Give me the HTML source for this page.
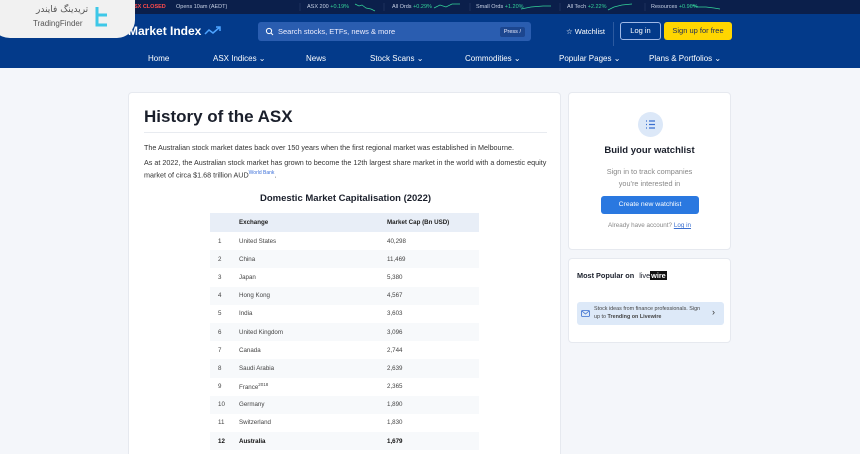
<!DOCTYPE html>
<html style="overflow:hidden;height:454px"><head><meta charset="utf-8"><style>
*{margin:0;padding:0;box-sizing:border-box}
body{width:860px;height:454px;overflow:hidden;background:#f4f6fa;font-family:"Liberation Sans",sans-serif;position:relative}
.tick{position:absolute;top:0;left:0;width:860px;height:14px;background:#0b1f4b;font-size:5.5px;color:#c8d2e6}
.tick span{position:absolute;top:4px}
.hdr{position:absolute;top:14px;left:0;width:860px;height:54px;background:#033a8a}
.nav span{position:absolute;top:40px;font-size:8px;color:#fff}
.card{position:absolute;background:#fff;border:1px solid #e6e9ef;border-radius:4px}
table{border-collapse:collapse;font-size:6.2px;color:#444}
td,th{height:18.2px;text-align:left}
th{background:#e8eef7;font-weight:bold;color:#222;height:19px}
tr.s td{background:#f7f9fb}
</style></head><body>
<div class="tick">
<span style="left:130px;color:#ff4b4b;font-weight:bold">ASX CLOSED</span>
<span style="left:176px">Opens 10am (AEDT)</span>
<span style="left:307px">ASX 200 <b style="color:#34d399;font-weight:normal">+0.19%</b></span>
<span style="left:392px">All Ords <b style="color:#34d399;font-weight:normal">+0.29%</b></span>
<span style="left:476px">Small Ords <b style="color:#34d399;font-weight:normal">+1.20%</b></span>
<span style="left:567px">All Tech <b style="color:#34d399;font-weight:normal">+2.22%</b></span>
<span style="left:651px">Resources <b style="color:#34d399;font-weight:normal">+0.96%</b></span>
<svg style="position:absolute;left:0;top:0" width="860" height="14"><g fill="none" stroke="#34d399" stroke-width=".7"><path d="M355 4l4 2 3-1 4 3 5 1 4 2"/><path d="M434 8l6-3 6 2 6-3 8 0"/><path d="M521 9l10-2 12-1 8 0"/><path d="M608 10l6-3 8-2 10-1"/><path d="M692 5l6 2 8 0 8 1 6 1"/></g><path d="M300 3v8M384 3v8M470 3v8M560 3v8M645 3v8" stroke="#33456e" stroke-width=".5"/></svg>
</div>
<div class="hdr">
<div style="position:absolute;left:128px;top:10px;color:#fff;font-size:12px;font-weight:bold">Market Index</div>
<svg style="position:absolute;left:204px;top:12px" width="18" height="10"><path d="M1 8l4-4 4 3 7-6M12 1h4v4" fill="none" stroke="#4da3ff" stroke-width="1.5"/></svg>
<div style="position:absolute;left:258px;top:8px;width:273px;height:19px;background:#2a5db0;border-radius:3px;color:#eef;font-size:7.5px;padding:5px 0 0 20px">Search stocks, ETFs, news &amp; more
<span style="position:absolute;right:6px;top:5px;background:#1c468f;font-size:5.5px;padding:2px 4px;border-radius:2px">Press /</span></div>
<svg style="position:absolute;left:265px;top:13px" width="9" height="9"><circle cx="4" cy="4" r="2.6" fill="none" stroke="#fff"/><path d="M6 6l2 2" stroke="#fff"/></svg>
<div style="position:absolute;left:566px;top:13px;color:#fff;font-size:7.5px">☆ Watchlist</div>
<div style="position:absolute;left:613px;top:8px;width:1px;height:24px;background:#2c5aa0"></div>
<div style="position:absolute;left:620px;top:8px;width:41px;height:18px;border:1px solid #9fb8e6;border-radius:3px;color:#fff;font-size:7.5px;text-align:center;line-height:16px">Log in</div>
<div style="position:absolute;left:664px;top:8px;width:68px;height:18px;background:#ffd600;border-radius:3px;color:#1a2a5a;font-size:7.5px;text-align:center;line-height:18px">Sign up for free</div>
<div class="nav"><span style="left:148px">Home</span><span style="left:213px">ASX Indices ⌄</span><span style="left:306px">News</span><span style="left:370px">Stock Scans ⌄</span><span style="left:465px">Commodities ⌄</span><span style="left:559px">Popular Pages ⌄</span><span style="left:649px">Plans &amp; Portfolios ⌄</span></div>
</div>
<div style="position:absolute;left:-10px;top:-10px;width:145px;height:48px;background:#f1f1f1;border-radius:0 0 18px 20px"></div>
<div style="position:absolute;left:36px;top:5px;font-size:9px;color:#555;font-family:'DejaVu Sans',sans-serif">تریدینگ فایندر</div>
<div style="position:absolute;left:33px;top:19px;font-size:8px;color:#555">TradingFinder</div>
<svg style="position:absolute;left:94px;top:6px" width="16" height="22"><path d="M3 1v18h10M3 9h10" fill="none" stroke="#3ec8e8" stroke-width="3"/></svg>

<div class="card" style="left:128px;top:92px;width:433px;height:362px;border-bottom:none;border-radius:4px 4px 0 0">
<div style="position:absolute;left:15px;top:14px;font-size:17px;font-weight:bold;color:#1a1f2b">History of the ASX</div>
<div style="position:absolute;left:15px;top:39px;width:403px;height:1px;background:#e8ebf0"></div>
<div style="position:absolute;left:15px;top:49px;width:405px;font-size:7.2px;color:#333;line-height:11px">The Australian stock market dates back over 150 years when the first regional market was established in Melbourne.<div style="margin-top:4px">As at 2022, the Australian stock market has grown to become the 12th largest share market in the world with a domestic equity market of circa $1.68 trillion AUD<sup style="font-size:5px;color:#3b6fd8">World Bank</sup>.</div></div>
<div style="position:absolute;left:0;width:433px;top:100px;text-align:center;font-size:9.5px;font-weight:bold;color:#1a1f2b">Domestic Market Capitalisation (2022)</div>
<table style="position:absolute;left:81px;top:120px;width:269px">
<tr><th style="width:29px"></th><th style="width:148px">Exchange</th><th>Market Cap (Bn USD)</th></tr>
<tr><td style="padding-left:8px">1</td><td>United States</td><td>40,298</td></tr>
<tr class="s"><td style="padding-left:8px">2</td><td>China</td><td>11,469</td></tr>
<tr><td style="padding-left:8px">3</td><td>Japan</td><td>5,380</td></tr>
<tr class="s"><td style="padding-left:8px">4</td><td>Hong Kong</td><td>4,567</td></tr>
<tr><td style="padding-left:8px">5</td><td>India</td><td>3,603</td></tr>
<tr class="s"><td style="padding-left:8px">6</td><td>United Kingdom</td><td>3,096</td></tr>
<tr><td style="padding-left:8px">7</td><td>Canada</td><td>2,744</td></tr>
<tr class="s"><td style="padding-left:8px">8</td><td>Saudi Arabia</td><td>2,639</td></tr>
<tr><td style="padding-left:8px">9</td><td>France<sup style="font-size:4.5px">2018</sup></td><td>2,365</td></tr>
<tr class="s"><td style="padding-left:8px">10</td><td>Germany</td><td>1,890</td></tr>
<tr><td style="padding-left:8px">11</td><td>Switzerland</td><td>1,830</td></tr>
<tr class="s" style="font-weight:bold;color:#111"><td style="padding-left:8px">12</td><td>Australia</td><td>1,679</td></tr>
</table>
</div>

<div class="card" style="left:568px;top:92px;width:163px;height:158px;text-align:center">
<div style="position:absolute;left:69px;top:19px;width:25px;height:25px;border-radius:50%;background:#dce8f8"></div>
<svg style="position:absolute;left:76px;top:26px" width="11" height="11"><path d="M1 2h1M4 2h6M1 5.5h1M4 5.5h6M1 9h1M4 9h6" stroke="#3a6fd0" stroke-width="1.2"/></svg>
<div style="position:absolute;top:52px;width:100%;font-size:9.5px;font-weight:bold;color:#1a1f2b">Build your watchlist</div>
<div style="position:absolute;top:73px;width:100%;font-size:7.3px;color:#888;line-height:11.5px">Sign in to track companies<br>you're interested in</div>
<div style="position:absolute;left:32px;top:103px;width:98px;height:18px;background:#2a78e0;border-radius:3px;color:#fff;font-size:6.8px;line-height:18px">Create new watchlist</div>
<div style="position:absolute;top:129px;width:100%;font-size:6.3px;color:#888">Already have account? <u style="color:#3a6fd0">Log in</u></div>
</div>
<div class="card" style="left:568px;top:258px;width:163px;height:85px">
<div style="position:absolute;left:8px;top:12px;font-size:7.3px;font-weight:bold;color:#1a1f2b">Most Popular on <span style="font-weight:normal;margin-left:3px">live</span><span style="background:#111;color:#fff;padding:0 1px">wire</span></div>
<div style="position:absolute;left:8px;top:43px;width:147px;height:23px;background:#dde9f8;border-radius:3px;font-size:5.4px;color:#444;padding:4px 22px 0 17px;line-height:7.5px">Stock ideas from finance professionals. Sign up to <b>Trending on Livewire</b></div>
<svg style="position:absolute;left:12px;top:51px" width="9" height="7"><rect x=".5" y=".5" width="8" height="6" rx="1" fill="none" stroke="#3a6fd0" stroke-width=".8"/><path d="M1 1l3.5 3L8 1" fill="none" stroke="#3a6fd0" stroke-width=".8"/></svg>
<div style="position:absolute;left:143px;top:48px;font-size:9px;color:#333">›</div>
</div>
</body></html>
